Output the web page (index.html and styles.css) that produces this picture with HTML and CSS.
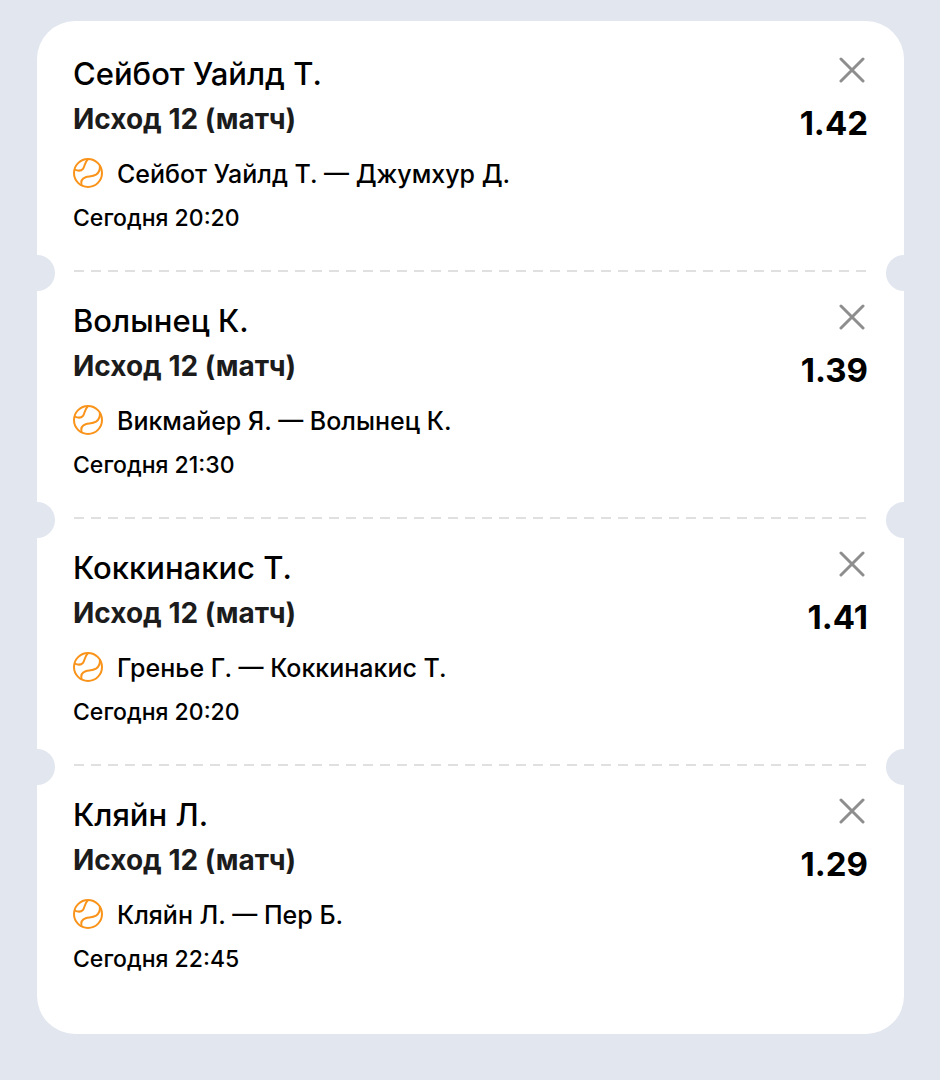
FILE: index.html
```html
<!DOCTYPE html>
<html lang="ru">
<head>
    <meta charset="UTF-8">
    <meta name="viewport" content="width=device-width, initial-scale=1.0">
    <title>Купон</title>
    <link rel="stylesheet" href="styles.css">
</head>
<body>
    <!-- Иконки -->
    <svg class="sprite" aria-hidden="true">
        <symbol id="tennis" viewBox="0 0 30 30">
            <circle cx="15" cy="15" r="14"/>
            <path d="M1.8 11.6C4.6 12.8 8 13.2 10 10.8C12 8.4 11.6 4 15 1.2"/>
            <path d="M8.6 27.4C7.6 23.4 9 20.4 12.6 19.2C16 18.2 19.6 18.8 23 16.6C26.2 14.4 27.4 11.4 26.8 7.6"/>
        </symbol>
        <symbol id="cross" viewBox="0 0 26 26">
            <path d="M2 2L24 24M24 2L2 24"/>
        </symbol>
    </svg>

    <ul class="coupon">
        <li class="bet">
            <div class="bet-info">
                <h2 class="bet-title">Сейбот Уайлд Т.</h2>
                <p class="bet-outcome">Исход 12 (матч)</p>
                <p class="bet-match"><svg class="bet-icon"><use href="#tennis"/></svg>Сейбот Уайлд Т. — Джумхур Д.</p>
                <p class="bet-time">Сегодня 20:20</p>
            </div>
            <div class="bet-side">
                <button class="bet-remove" type="button" aria-label="Удалить"><svg><use href="#cross"/></svg></button>
                <span class="bet-odds">1.42</span>
            </div>
        </li>
        <li class="bet">
            <div class="bet-info">
                <h2 class="bet-title">Волынец К.</h2>
                <p class="bet-outcome">Исход 12 (матч)</p>
                <p class="bet-match"><svg class="bet-icon"><use href="#tennis"/></svg>Викмайер Я. — Волынец К.</p>
                <p class="bet-time">Сегодня 21:30</p>
            </div>
            <div class="bet-side">
                <button class="bet-remove" type="button" aria-label="Удалить"><svg><use href="#cross"/></svg></button>
                <span class="bet-odds">1.39</span>
            </div>
        </li>
        <li class="bet">
            <div class="bet-info">
                <h2 class="bet-title">Коккинакис Т.</h2>
                <p class="bet-outcome">Исход 12 (матч)</p>
                <p class="bet-match"><svg class="bet-icon"><use href="#tennis"/></svg>Гренье Г. — Коккинакис Т.</p>
                <p class="bet-time">Сегодня 20:20</p>
            </div>
            <div class="bet-side">
                <button class="bet-remove" type="button" aria-label="Удалить"><svg><use href="#cross"/></svg></button>
                <span class="bet-odds">1.41</span>
            </div>
        </li>
        <li class="bet">
            <div class="bet-info">
                <h2 class="bet-title">Кляйн Л.</h2>
                <p class="bet-outcome">Исход 12 (матч)</p>
                <p class="bet-match"><svg class="bet-icon"><use href="#tennis"/></svg>Кляйн Л. — Пер Б.</p>
                <p class="bet-time">Сегодня 22:45</p>
            </div>
            <div class="bet-side">
                <button class="bet-remove" type="button" aria-label="Удалить"><svg><use href="#cross"/></svg></button>
                <span class="bet-odds">1.29</span>
            </div>
        </li>
    </ul>
</body>
</html>
```
FILE: styles.css
```css
:root {
    --page-color: #e1e6ef;
    --accent-color: #f9931a;
}

body {
    margin: 0;
    padding: 21px 36px 46px 37px;
    background-color: var(--page-color);
    font-family: Inter, "Noto Sans", sans-serif;
    color: #000;
}
h2, p {
    margin: 0;
}
.sprite {
    position: absolute;
    width: 0;
    height: 0;
}
.coupon {
    list-style: none;
    margin: 0;
    padding: 4px 0 21px;
    background-color: #fff;
    border-radius: 38px;
}
.bet {
    position: relative;
    display: flex;
    justify-content: space-between;
    padding: 29px 36px 38px;
}
/* Линия отрыва */
.bet:not(:last-child) {
    background: repeating-linear-gradient(90deg, #e0e0e0 0, #e0e0e0 10px, transparent 10px, transparent 17px) 37px 100% / calc(100% - 73px) 2px no-repeat;
}
/* Вырезы по краям */
.bet:not(:last-child)::before,
.bet:not(:last-child)::after {
    content: '';
    position: absolute;
    bottom: -19px;
    width: 18px;
    height: 36px;
    background-color: var(--page-color);
}
.bet::before {
    left: 0;
    border-radius: 0 18px 18px 0;
}
.bet::after {
    right: 0;
    border-radius: 18px 0 0 18px;
}
.bet-title {
    font-size: 31px;
    line-height: 40px;
    font-weight: 500;
}
.bet-outcome {
    margin-top: 7px;
    font-size: 28px;
    line-height: 36px;
    font-weight: 700;
    color: #1c1c1c;
}
.bet-match {
    display: flex;
    align-items: center;
    gap: 14px;
    margin-top: 19px;
    font-size: 25px;
    line-height: 36px;
    font-weight: 500;
}
.bet-icon {
    flex: none;
    width: 30px;
    height: 30px;
    margin-bottom: 3px;
    fill: none;
    stroke: var(--accent-color);
    stroke-width: 2;
}
.bet-time {
    margin-top: 10px;
    font-size: 23px;
    line-height: 32px;
    font-weight: 500;
}
.bet-side {
    display: flex;
    flex-direction: column;
    align-items: flex-end;
}
.bet-remove {
    display: flex;
    margin: 0;
    padding: 3px;
    border: none;
    background: none;
    cursor: pointer;
}
.bet-remove svg {
    width: 26px;
    height: 26px;
    fill: none;
    stroke: #8e8e8e;
    stroke-width: 3;
    stroke-linecap: round;
}
.bet-odds {
    margin-top: 17px;
    font-size: 33px;
    line-height: 40px;
    font-weight: 700;
}
```
